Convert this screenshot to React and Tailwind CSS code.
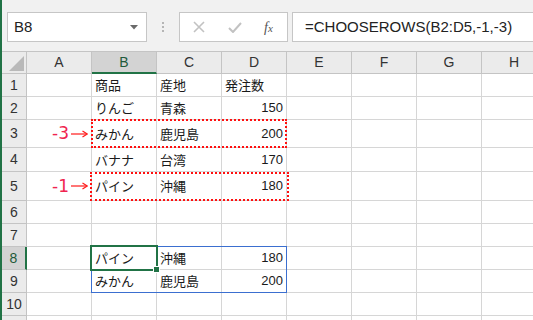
import React from "react"

const cols = ["A", "B", "C", "D", "E", "F", "G", "H"]

// 各行: 番号, B, C, D, Aのラベル
const rows = [
    { n: 1, b: "商品", c: "産地", d: "発注数", dLeft: true },
    { n: 2, b: "りんご", c: "青森", d: "150" },
    { n: 3, b: "みかん", c: "鹿児島", d: "200", label: "-3" },
    { n: 4, b: "バナナ", c: "台湾", d: "170" },
    { n: 5, b: "パイン", c: "沖縄", d: "180", label: "-1" },
    { n: 6 },
    { n: 7 },
    { n: 8, b: "パイン", c: "沖縄", d: "180", active: true },
    { n: 9, b: "みかん", c: "鹿児島", d: "200" },
    { n: 10 },
    { n: 11, hidden: true },
]

const jp = { fontFamily: '"Noto Sans CJK JP", "Liberation Sans", sans-serif' }

const Arrow = () => (
    <svg width="17" height="10" viewBox="0 0 17 10" className="ml-[2px]">
        <path d="M0 5H16" stroke="#ff1a1a" strokeWidth="1.2" />
        <path d="M11.5 2L16.3 5L11.5 8" stroke="#ff1a1a" strokeWidth="1.2" fill="none" />
    </svg>
)

const Toolbar = () => (
    <div className="h-[51px] bg-[#f1f1f1] flex items-start pt-[12px]">
        {/* 名前ボックス */}
        <div className="ml-[5px] w-[140px] h-[30px] bg-white border border-[#c6c6c6] flex items-center justify-between pl-[6px] pr-[8px]">
            <span className="text-[15px] text-[#222]" style={{ fontFamily: '"Liberation Sans", sans-serif' }}>B8</span>
            <svg width="8" height="5" viewBox="0 0 8 5">
                <path d="M0 0H8L4 4.5Z" fill="#6a6a6a" />
            </svg>
        </div>
        {/* 区切り */}
        <div className="w-[32px] h-[30px] flex flex-col items-center justify-center gap-[2px]">
            <span className="w-[2px] h-[2px] bg-[#b5b5b5]" />
            <span className="w-[2px] h-[2px] bg-[#b5b5b5]" />
            <span className="w-[2px] h-[2px] bg-[#b5b5b5]" />
        </div>
        {/* ボタン */}
        <div className="w-[109px] h-[30px] bg-white border border-[#c6c6c6] flex items-center">
            <svg width="12" height="12" viewBox="0 0 12 12" className="ml-[13px]">
                <path d="M1 1L11 11M11 1L1 11" stroke="#c2c2c2" strokeWidth="1.6" />
            </svg>
            <svg width="14" height="11" viewBox="0 0 14 11" className="ml-[23px]">
                <path d="M1 6L5 10L13 1" stroke="#c2c2c2" strokeWidth="2" fill="none" />
            </svg>
            <span className="ml-[22px] text-[14px] italic text-[#555]" style={{ fontFamily: '"Liberation Serif", serif' }}>
                f<span className="text-[11px]">x</span>
            </span>
        </div>
        {/* 数式バー */}
        <div className="ml-[4px] flex-1 h-[30px] bg-white border border-[#c6c6c6] border-r-0 flex items-center pl-[12px]">
            <span className="text-[15px] text-[#222]" style={{ fontFamily: '"Liberation Sans", sans-serif' }}>
                =CHOOSEROWS(B2:D5,-1,-3)
            </span>
        </div>
    </div>
)

export default function App() {
    return (
        <div className="w-[533px] h-[320px] overflow-hidden bg-white border-l-2 border-[#217346]">
            <Toolbar />
            <div className="relative">
                <div className="grid grid-cols-[25px_repeat(8,65px)] grid-rows-[23px_23px_23px_28px_24px_29px_23px_23px_23px_23px_23px_23px]">
                    {/* 見出し行 */}
                    <div className="bg-[#ebebeb] border-t border-b border-r border-[#c4c4c4] relative">
                        <svg width="15" height="15" viewBox="0 0 15 15" className="absolute left-[7px] top-[4px]">
                            <path d="M15 0V15H0Z" fill="#b9b9b9" />
                        </svg>
                    </div>
                    {cols.map((c) => (
                        <div
                            key={c}
                            className={
                                c === "B"
                                    ? "bg-[#d3d3d3] border-t border-[#c4c4c4] border-b-2 border-b-[#217346] border-r border-r-[#c4c4c4] flex items-center justify-center text-[14px] text-[#1f5a3a]"
                                    : "bg-[#ebebeb] border-t border-b border-r border-[#c4c4c4] flex items-center justify-center text-[14px] text-[#333]"
                            }
                            style={{ fontFamily: '"Liberation Sans", sans-serif' }}
                        >
                            {c}
                        </div>
                    ))}

                    {rows.map((r) => (
                        <React.Fragment key={r.n}>
                            <div
                                className={
                                    r.active
                                        ? "bg-[#d3d3d3] border-b border-[#c4c4c4] border-r-2 border-r-[#217346] flex items-center justify-center text-[14px] text-[#1f5a3a]"
                                        : "bg-[#ebebeb] border-b border-r border-[#c4c4c4] flex items-center justify-center text-[14px] text-[#333]"
                                }
                                style={{ fontFamily: '"Liberation Sans", sans-serif' }}
                            >
                                {r.hidden ? null : r.n}
                            </div>
                            {cols.map((c) => {
                                let content = null
                                let cls = "border-b border-r border-[#d6d6d6] flex items-center px-[3px] text-[13px] text-[#1a1a1a] whitespace-nowrap"
                                if (c === "A" && r.label) {
                                    cls += " justify-end"
                                    content = (
                                        <>
                                            <span className="text-[17px] text-[#f0244f] leading-none" style={{ fontFamily: '"DejaVu Sans", sans-serif' }}>
                                                {r.label}
                                            </span>
                                            <Arrow />
                                        </>
                                    )
                                } else if (c === "B") content = r.b
                                else if (c === "C") content = r.c
                                else if (c === "D") {
                                    content = r.d
                                    if (!r.dLeft) cls += " justify-end"
                                }
                                const isNum = c === "D" && r.d && !r.dLeft
                                return (
                                    <div
                                        key={c}
                                        className={cls}
                                        style={isNum ? { fontFamily: '"Liberation Sans", sans-serif' } : jp}
                                    >
                                        {content}
                                    </div>
                                )
                            })}
                        </React.Fragment>
                    ))}
                </div>

                {/* コピー範囲の点線 */}
                <div className="absolute left-[89px] top-[68px] w-[196px] h-[29px] border-2 border-dotted border-[#ff1010]" />
                <div className="absolute left-[88px] top-[121px] w-[199px] h-[29px] border-2 border-dotted border-[#ff1010]" />
                {/* スピル範囲 */}
                <div className="absolute left-[89px] top-[195px] w-[196px] h-[47px] border border-[#3b6fd0]" />
                {/* アクティブセル */}
                <div className="absolute left-[88px] top-[194px] w-[68px] h-[26px] border-2 border-[#217346]" />
                <div className="absolute left-[151px] top-[215px] w-[7px] h-[7px] bg-[#217346] border border-white" />
            </div>
        </div>
    )
}
